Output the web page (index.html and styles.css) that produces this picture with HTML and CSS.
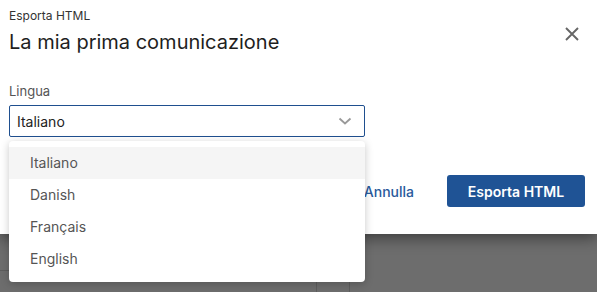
FILE: index.html
```html
<!DOCTYPE html>
<html lang="it">
<head>
<meta charset="utf-8">
<title>Esporta HTML</title>
<link rel="stylesheet" href="styles.css">
</head>
<body>
<div class="page">
  <div class="dialog">
    <div class="head">
      <div class="titles">
        <div class="kicker">Esporta HTML</div>
        <h1 class="title">La mia prima comunicazione</h1>
      </div>
      <button class="close" aria-label="Chiudi">
        <svg width="14" height="14" viewBox="0 0 14 14"><path d="M1 1 L13 13 M13 1 L1 13" stroke="#666" stroke-width="1.9" fill="none"/></svg>
      </button>
    </div>
    <div class="field">
      <label class="label">Lingua</label>
      <div class="select-wrap">
        <div class="select">
          <span class="value">Italiano</span>
          <svg class="chev" width="14" height="8" viewBox="0 0 14 8"><path d="M1.5 1.5 L7 6.5 L12.5 1.5" stroke="#999" stroke-width="1.8" fill="none"/></svg>
        </div>
        <ul class="menu">
          <li class="opt active">Italiano</li>
          <li class="opt">Danish</li>
          <li class="opt">Français</li>
          <li class="opt">English</li>
        </ul>
      </div>
    </div>
    <div class="foot">
      <button class="btn-text">Annulla</button>
      <button class="btn-primary">Esporta HTML</button>
    </div>
  </div>
  <div class="backdrop">
    <div class="bg-left"></div>
    <div class="bg-mid"></div>
    <div class="bg-col"></div>
    <div class="bg-rest"></div>
  </div>
</div>
</body>
</html>
```
FILE: styles.css
```css
html, body {
  margin: 0;
  padding: 0;
}
body {
  background: #6d6d6d;
  font-family: Inter, "Noto Sans", sans-serif;
  width: 597px;
  height: 292px;
  overflow: hidden;
}
.page {
  display: flex;
  flex-direction: column;
  height: 292px;
}
.dialog {
  background: #fff;
  height: 234px;
  box-sizing: border-box;
  padding: 8px 12px 0 9px;
  box-shadow: 0 4px 14px rgba(0,0,0,0.45);
  position: relative;
  z-index: 2;
}
.head {
  display: flex;
  justify-content: space-between;
  align-items: flex-start;
}
.kicker {
  font-size: 12px;
  line-height: 16px;
  color: #333;
}
.title {
  margin: 5px 0 0;
  font-size: 20px;
  line-height: 26px;
  font-weight: 400;
  color: #1e1e1e;
}
.close {
  margin-top: 15px;
  margin-right: 2px;
  width: 22px;
  height: 22px;
  border: 0;
  padding: 0;
  background: none;
  display: flex;
  align-items: center;
  justify-content: center;
}
.field {
  margin-top: 28px;
  width: 356px;
}
.label {
  display: block;
  font-size: 13px;
  line-height: 17px;
  color: #555;
}
.select-wrap {
  margin-top: 5px;
  position: relative;
}
.select {
  height: 32px;
  box-sizing: border-box;
  border: 1px solid #1f4f8f;
  border-radius: 2px;
  display: flex;
  align-items: center;
  justify-content: space-between;
  padding: 0 12px 0 7px;
}
.value {
  font-size: 14px;
  color: #222;
}
.menu {
  position: absolute;
  left: 0;
  top: 36px;
  width: 356px;
  margin: 0;
  padding: 6px 0 7px;
  list-style: none;
  background: #fff;
  border-radius: 4px;
  box-shadow: 0 2px 8px rgba(0,0,0,0.22);
  z-index: 5;
}
.opt {
  height: 32px;
  line-height: 32px;
  padding-left: 21px;
  font-size: 14px;
  color: #555;
}
.opt.active {
  background: #f5f5f5;
}
.foot {
  margin-top: 38px;
  display: flex;
  justify-content: flex-end;
  align-items: center;
  gap: 17px;
}
.btn-text {
  border: 0;
  background: none;
  font-family: inherit;
  font-size: 14px;
  font-weight: 500;
  color: #2a5a9c;
  padding: 0 16px;
  height: 32px;
}
.btn-primary {
  border: 0;
  background: #1f5395;
  color: #fff;
  font-family: inherit;
  font-size: 14px;
  font-weight: 600;
  height: 32px;
  width: 138px;
  border-radius: 3px;
}
.backdrop {
  flex: 1;
  display: flex;
  background: #6d6d6d;
}
.bg-left {
  width: 9px;
  height: 36px;
  border-bottom: 1px solid #5d5d5d;
}
.bg-mid {
  width: 307px;
}
.bg-col {
  width: 32px;
  border-left: 1px solid #5d5d5d;
  border-right: 1px solid #5d5d5d;
}
.bg-rest {
  flex: 1;
}
```
